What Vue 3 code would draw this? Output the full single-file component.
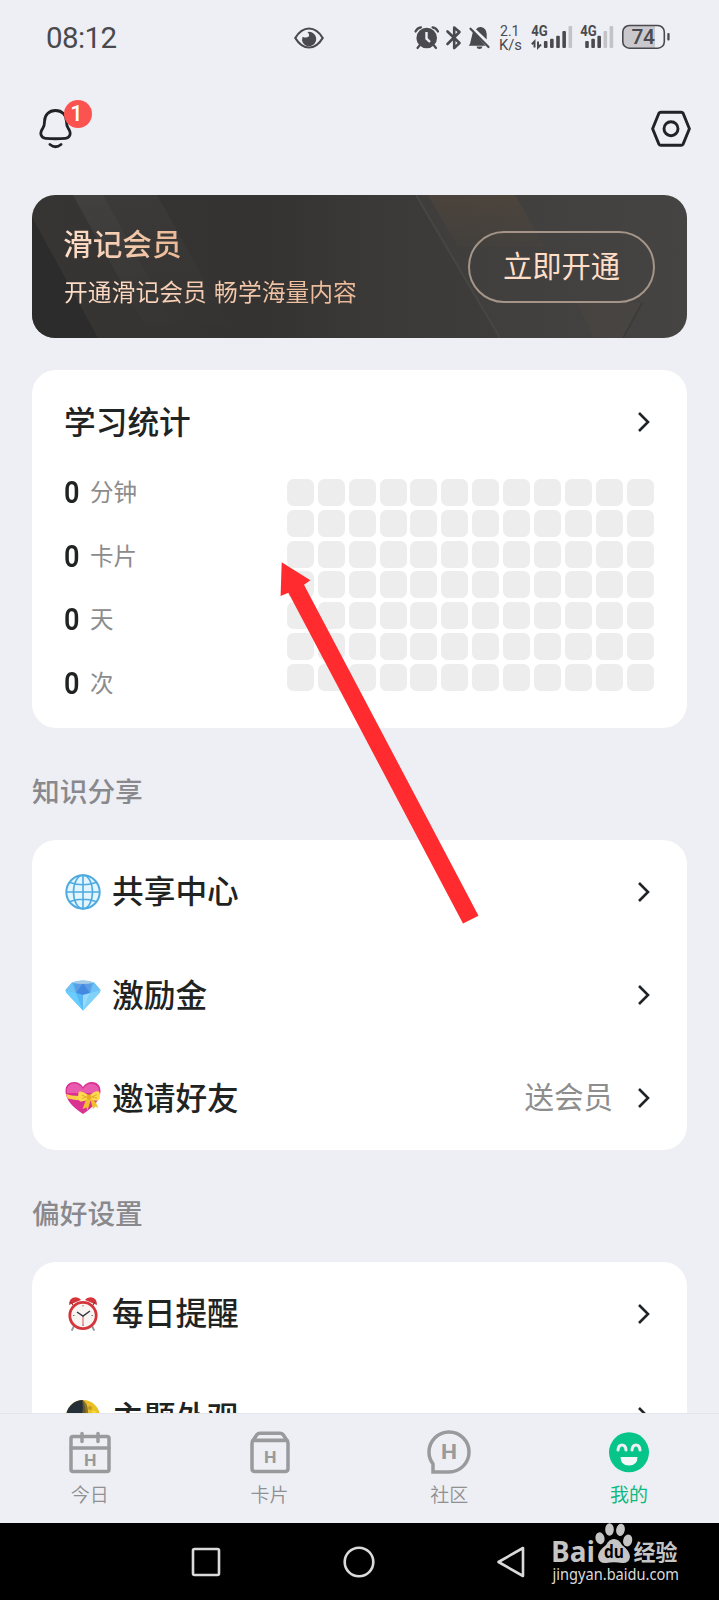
<script setup>
const stats = [
  { value: '0', unit: '分钟' },
  { value: '0', unit: '卡片' },
  { value: '0', unit: '天' },
  { value: '0', unit: '次' },
]
const shareItems = [
  { icon: 'globe', label: '共享中心', extra: '' },
  { icon: 'gem', label: '激励金', extra: '' },
  { icon: 'heart', label: '邀请好友', extra: '送会员' },
]
const prefItems = [
  { icon: 'clock', label: '每日提醒', extra: '' },
  { icon: 'moon', label: '主题外观', extra: '' },
]
const sections = [
  { title: '知识分享', items: shareItems },
  { title: '偏好设置', items: prefItems },
]
const tabs = [
  { icon: 'calendar', label: '今日' },
  { icon: 'box', label: '卡片' },
  { icon: 'chat', label: '社区' },
  { icon: 'smile', label: '我的', active: true },
]
const tops = [21, 18.7, 15.7, 11, 6]
</script>

<template>
  <div class="screen">
    <main class="content">
      <header class="status">
        <span class="time">08:12</span>
        <svg class="eye" width="30" height="22" viewBox="0 0 30 22">
          <path d="M1.3 11C5 4.8 9.500 1.500 15 1.500S25 4.800 28.700 11C25 17.200 20.500 20.500 15 20.500S5 17.200 1.300 11Z" fill="none" stroke="#49494e" stroke-width="2.200" />
          <path d="M15 4.800A7.200 7.200 0 1 1 8 13.500L8.600 9.700Q12.500 11.500 14.700 9.500Q16 7.500 13.500 5.300Z" fill="#49494e" />
        </svg>
        <svg class="indicators" width="265" height="36" viewBox="0 0 265 36">
          <g fill="#4a4a4e" stroke="none">
            <circle cx="16.700" cy="18" r="10.300" />
            <path d="M5.500 11.500Q7 8 11 7.300M22.500 7.300Q26.500 8 28 11.500M9.500 25.500 7.500 28M24 25.500 26 28" fill="none" stroke="#4a4a4e" stroke-width="2.200" stroke-linecap="round" />
            <path d="M16.500 12V18.700L20 22" fill="none" stroke="#eeeff4" stroke-width="2.400" />
            <path d="M37.500 11.500 49.500 23 44.200 28V7.500L49.500 12 37.500 24" fill="none" stroke="#4a4a4e" stroke-width="2.600" stroke-linejoin="round" stroke-linecap="round" />
            <path d="M63 11.500 60 23.700 58.800 25.800H75.500ZM66 9.200Q68 6.700 71 7Q76.300 8 76.700 14V19.500ZM66.500 26.500H72.500Q72 29 69.500 29T66.500 26.500Z" />
            <path d="M60.500 8.700 78.500 27" stroke="#4a4a4e" stroke-width="2.200" stroke-linecap="round" />
          </g>
          <g class="net">
            <text x="90" y="15.700" font-size="15.500" textLength="19.500" lengthAdjust="spacingAndGlyphs">2.1</text>
            <text x="89" y="29.700" font-size="15.500" textLength="23" lengthAdjust="spacingAndGlyphs">K/s</text>
            <text x="121.300" y="16.300" class="gen" textLength="16.500" lengthAdjust="spacingAndGlyphs">4G</text>
            <text x="170.300" y="16.300" class="gen" textLength="16.500" lengthAdjust="spacingAndGlyphs">4G</text>
          </g>
          <path d="M121.800 24.200 124.500 21.500V27.500M131 24.500 128 27.500V21.500" fill="none" stroke="#4a4a4e" stroke-width="2" />
          <rect v-for="(t, i) in tops" :key="'a' + i" :x="133.900 + i * 6.150" :y="t" width="3.600" :height="28 - t" rx="1" :fill="i < 4 ? '#4a4a4e' : '#c3c3c7'" />
          <rect v-for="(t, i) in tops" :key="'b' + i" :x="175.200 + i * 6.100" :y="t" width="3.600" :height="28 - t" rx="1" :fill="i < 3 ? '#4a4a4e' : '#c3c3c7'" />
          <path d="M219 6H245V28H219Q213 28 213 22V12Q213 6 219 6Z" fill="#c9c9cd" />
          <rect x="212.800" y="5.500" width="41.500" height="22.700" rx="6.500" fill="none" stroke="#4a4a4e" stroke-width="1.600" />
          <rect x="257.300" y="13" width="2.300" height="7.500" rx="1" fill="#4a4a4e" />
          <text x="221.500" y="24" class="battery" textLength="23.500">74</text>
        </svg>
      </header>

      <div class="toolbar">
        <div class="bell">
          <svg width="34" height="42" viewBox="0 0 34 42" fill="none" stroke="#1f2325" stroke-width="2.800" stroke-linecap="round" stroke-linejoin="round">
            <path d="M16.500 3.500C10 3.500 5.600 8 5.600 14C5.600 19.500 4.500 20 2.800 23C0.800 26.500 2 31 6.500 31.300Q16.500 32.200 26.500 31.300C31 31 32.200 26.500 30.200 23C28.500 20 27.400 19.500 27.400 14C27.400 8 23 3.500 16.500 3.500Z" />
            <path d="M11 37.500Q16.500 42 22 37.500" />
          </svg>
          <span class="badge">1</span>
        </div>
        <svg width="41" height="38" viewBox="0 0 41 38" fill="none" stroke="#1f2325" stroke-width="2.900" stroke-linejoin="round">
          <path d="M9.800 2.200H30.200Q31.500 2.200 32.100 3.300L38.400 18.700 32.100 34.100Q31.500 35.200 30.200 35.200H9.800Q8.500 35.200 7.900 34.100L1.600 18.700 7.900 3.300Q8.500 2.200 9.800 2.200Z" />
          <circle cx="20" cy="18.700" r="7" />
        </svg>
      </div>

      <section class="vip">
        <svg class="vip-bg" width="655" height="143" viewBox="0 0 655 143">
          <defs>
            <linearGradient id="fadeA" x1="0" y1="0" x2="0" y2="1">
              <stop offset="0" stop-color="#fff" stop-opacity=".03" />
              <stop offset="1" stop-color="#fff" stop-opacity="0" />
            </linearGradient>
            <linearGradient id="fadeB" x1="0" y1="0" x2="0" y2="1">
              <stop offset="0" stop-color="#5a4a3a" stop-opacity=".45" />
              <stop offset="1" stop-color="#5a4a3a" stop-opacity=".1" />
            </linearGradient>
          </defs>
          <path d="M0 22 66 143H0Z" fill="#2a2a2a" opacity=".7" />
          <path d="M41 0H125L205 143H120Z" fill="url(#fadeA)" />
          <path d="M41 0H71L150 143H120Z" fill="url(#fadeA)" />
          <path d="M383 0H655V143H468Z" fill="#fff" opacity=".015" />
          <path d="M384 0 468 143" stroke="#484643" stroke-width="2" />
          <path d="M396 0H483L513 52H426Z" fill="url(#fadeB)" />
          <path d="M545 108H610L591 143H562Z" fill="#6a5a45" opacity=".1" />
          <path d="M610 108 591 143" stroke="#3b3a38" stroke-width="1.500" />
        </svg>
        <div class="vip-text">
          <div class="vip-title">滑记会员</div>
          <div class="vip-sub">开通滑记会员 畅学海量内容</div>
        </div>
        <button class="vip-btn">立即开通</button>
      </section>

      <section class="card stats">
        <div class="stats-head">
          <span class="label">学习统计</span>
          <svg class="chev" width="14" height="22" viewBox="0 0 14 22"><path d="M2 2 11 11 2 20" /></svg>
        </div>
        <div class="stats-body">
          <ul class="figures">
            <li v-for="s in stats" :key="s.unit"><b>{{ s.value }}</b><span>{{ s.unit }}</span></li>
          </ul>
          <div class="heat"><i v-for="n in 84" :key="n"></i></div>
        </div>
      </section>

      <template v-for="sec in sections" :key="sec.title">
        <h2 class="section-title">{{ sec.title }}</h2>
        <section class="card list">
          <div v-for="it in sec.items" :key="it.label" class="row">
            <svg class="emoji" width="36" height="36" viewBox="0 0 36 36">
              <g v-if="it.icon === 'globe'" fill="none" stroke="#4eaadf" stroke-width="1.600">
                <circle cx="18" cy="18" r="16.700" fill="#e3f6ff" stroke-width="2" />
                <ellipse cx="18" cy="18" rx="9.500" ry="16.700" />
                <path d="M18 1V35M1 18H35M5 8.500Q18 13 31 8.500M5 27.500Q18 23 31 27.500" />
              </g>
              <g v-else-if="it.icon === 'gem'">
                <path d="M7 5.500Q18 1.500 29 5.500L35.500 13Q35.500 15 34 16.500L18 33.500 2 16.500Q.500 15 .500 13Z" fill="#4fb9f6" />
                <path d="M7 5.500 11 16 .500 13ZM29 5.500 25 16 35.500 13Z" fill="#6fc2f3" />
                <path d="M9 5 18 6 11 16ZM27 5 18 6 25 16Z" fill="#5d9de4" />
                <path d="M18 6 25 16 18 18 11 16Z" fill="#4389e2" />
                <path d="M.500 13 11 16 18 33.500 2 16.500Z" fill="#69cdfd" />
                <path d="M35.500 13 25 16 18 33.500 34 16.500Z" fill="#80d2f8" />
                <path d="M11 16 18 18V33.500Z" fill="#58b8f5" />
                <path d="M25 16 18 18V33.500Z" fill="#9ad9fa" />
                <path d="M7 5.500Q18 1.500 29 5.500Q18 8.500 7 5.500Z" fill="#a5cbe6" />
              </g>
              <g v-else-if="it.icon === 'heart'">
                <path d="M18 34C7 27 .500 19 .500 11C.500 5 4.500 2 9 2C13 2 16.500 4 18 7C19.500 4 23 2 27 2C31.500 2 35.500 5 35.500 11C35.500 19 29 27 18 34Z" fill="#d93292" />
                <path d="M2 9Q4 3 10 3.500Q15 4 18 9Q22 3 28 4Q33 5 34 10L33 13H2Z" fill="#ea63b3" opacity=".85" />
                <path d="M1 14Q12 18 35 13.500L34.500 19Q18 22 2.500 18.500Z" fill="#f8cf46" />
                <path d="M22 17 17.500 29 21.500 27.500 22.500 30.500 26 19ZM25 18 28 29 30.500 26.500 33.500 28Q31 22 27 18Z" fill="#f2bd2e" />
                <path d="M24 15.500Q15 9.500 13.500 12.500Q12.500 18 14.500 21Q17 23 24 18Q31 22.500 34 19.500Q36 15 34 11.500Q31 10 24 15.500Z" fill="#ffd94e" />
                <path d="M17 15 21 17 17 18.500M32 14.500 27 17 32 18" fill="none" stroke="#e0aa2d" stroke-width="1" />
                <circle cx="24" cy="17" r="2.600" fill="#e9aa26" />
              </g>
              <g v-else-if="it.icon === 'clock'">
                <path d="M9 30 7 34M27 30 29 34" stroke="#92969b" stroke-width="1.800" stroke-linecap="round" />
                <path d="M4 9Q4 2 10 1.200Q14 1.200 16 4ZM32 9Q32 2 26 1.200Q22 1.200 20 4Z" fill="#d5353a" />
                <path d="M6 6 8 9M30 6 28 9" stroke="#9a3033" stroke-width="1.300" />
                <circle cx="18" cy="19.500" r="13.200" fill="#f7f4f2" stroke="#d4353b" stroke-width="2.800" />
                <path d="M18 19.500V29.500" stroke="#db5558" />
                <path d="M12 16 18 20 25 15" fill="none" stroke="#373b40" stroke-width="1.500" />
                <path d="M18 9V10.500M18 28.500V30M8 19.500H9.500M26.500 19.500H28" stroke="#777" />
              </g>
              <g v-else>
                <circle cx="18" cy="18" r="17" fill="#e9c026" />
                <path d="M18 1A17 17 0 0 0 18 35Q24 18 18 1Z" fill="#252f37" />
                <path d="M17 1Q24 3 23 18L16 20Q19 9 17 1Z" fill="#75632c" opacity=".8" />
                <circle cx="25" cy="9" r="2" fill="#c29a22" />
                <circle cx="29" cy="14" r="2.500" fill="#f7da35" />
              </g>
            </svg>
            <span class="label">{{ it.label }}</span>
            <span class="extra">{{ it.extra }}</span>
            <svg class="chev" width="14" height="22" viewBox="0 0 14 22"><path d="M2 2 11 11 2 20" /></svg>
          </div>
        </section>
      </template>
    </main>

    <nav class="tabs">
      <div v-for="t in tabs" :key="t.label" class="tab" :class="{ active: t.active }">
        <svg width="44" height="44" viewBox="0 0 44 44" fill="none" stroke="#999a9c" stroke-width="3.500" stroke-linejoin="round" stroke-linecap="round">
          <g v-if="t.icon === 'calendar'">
            <rect x="3" y="6.500" width="38" height="35" rx="2" />
            <path d="M3 18H41M14 3.500V11.500M30 3.500V11.500" />
            <text x="16" y="35.500" textLength="12.500" lengthAdjust="spacingAndGlyphs" class="mark">H</text>
          </g>
          <g v-else-if="t.icon === 'box'">
            <path d="M4 13.500Q4 10.500 6 9L9 4.500Q10 3.200 12 3.200H32Q34 3.200 35 4.500L38 9Q40 10.500 40 13.500V38.500Q40 41.500 37 41.500H7Q4 41.500 4 38.500Z" />
            <path d="M6 10.300H38" stroke-width="3.700" />
            <text x="16" y="32.500" textLength="12.500" lengthAdjust="spacingAndGlyphs" class="mark">H</text>
          </g>
          <g v-else-if="t.icon === 'chat'">
            <path d="M6 42V34C3.500 30.500 2 26.500 2 22.200A20 20 0 1 1 22 42Z" stroke-linejoin="miter" />
            <text x="14" y="29.300" textLength="16" lengthAdjust="spacingAndGlyphs" class="mark big">H</text>
          </g>
          <g v-else stroke="none">
            <circle cx="22" cy="22.300" r="20" fill="#07c588" />
            <path d="M11 20Q11.500 15 15 15T19 20M25 20Q25.500 15 29 15T33 20" stroke="#eeeff4" stroke-width="3" />
            <path d="M13.500 27H30.500Q30.500 35.500 22 35.500T13.500 27Z" fill="#f4f8f8" />
          </g>
        </svg>
        <span>{{ t.label }}</span>
      </div>
    </nav>

    <footer class="sysnav">
      <svg width="30" height="30" viewBox="0 0 30 30"><rect x="2" y="2" width="26" height="26" rx="1.500" /></svg>
      <svg width="32" height="32" viewBox="0 0 32 32"><circle cx="16" cy="16" r="14.300" /></svg>
      <svg width="30" height="32" viewBox="0 0 30 32"><path d="M2.500 16 27 2V30Z" /></svg>
    </footer>

    <svg class="arrow" width="200" height="364" viewBox="280 561 200 364">
      <path d="M281.700 562.300 310.400 580.200 304 584.700 478.500 915.700 463 923.500 288.400 592.700 280.600 596Z" fill="#ff2b2f" />
    </svg>

    <svg class="watermark" width="140" height="66" viewBox="0 0 140 66">
      <text x="3" y="41.700" class="wm-name" textLength="44" lengthAdjust="spacingAndGlyphs">Bai</text>
      <ellipse cx="52" cy="18.300" rx="4.500" ry="6" transform="rotate(-12 52 18.300)" />
      <ellipse cx="61.500" cy="9.500" rx="4.300" ry="6.200" />
      <ellipse cx="72.500" cy="9.800" rx="4.300" ry="6.200" transform="rotate(10 72.500 9.800)" />
      <ellipse cx="79.700" cy="20.500" rx="4.500" ry="6" transform="rotate(15 79.700 20.500)" />
      <path d="M66 19Q71 19 74 25Q82 31 82 37Q81 43.500 74 43Q66 41.500 58 43Q51 43.500 50 37Q50 31 58 25Q61 19 66 19Z" />
      <text x="56" y="38" class="wm-du" textLength="20" lengthAdjust="spacingAndGlyphs">du</text>
      <text x="85.500" y="39.700" class="wm-cn" textLength="44">经验</text>
      <text x="4.500" y="59.500" class="wm-url" textLength="126.500" lengthAdjust="spacingAndGlyphs">jingyan.baidu.com</text>
    </svg>
  </div>
</template>

<style>
body { background: #eeeff4; }
</style>

<style scoped>
.screen {
  position: relative;
  width: 719px;
  height: 1600px;
  overflow: hidden;
  display: flex;
  flex-direction: column;
  background: #eeeff4;
  color: #1f2423;
  font-family: "Noto Sans CJK SC", "Noto Sans", sans-serif;
}
.content { height: 1413px; flex: none; overflow: hidden; padding: 0 32px; box-sizing: border-box; }
.status { display: flex; align-items: flex-start; height: 76px; margin: 0 -32px; }
.time { width: 294px; padding-left: 46px; margin-top: 20px; font: 400 29.500px/36px Roboto, sans-serif; letter-spacing: -.6px; color: #49494e; }
.eye { margin-top: 26.500px; }
.indicators { margin: 20px 0 0 86px; }
.status > * { flex: none; box-sizing: border-box; }
.net text { font-family: Roboto, sans-serif; fill: #4a4a4e; }
.net .gen { font-size: 14.500px; font-weight: 700; }
.battery { font: 500 21px Roboto, sans-serif; fill: #4a4a4e; }
.toolbar { display: flex; justify-content: space-between; align-items: flex-start; height: 119px; margin: 0 -5px 0 7px; }
.toolbar > svg { margin-top: 33.500px; }
.bell { position: relative; margin-top: 31px; }
.badge {
  position: absolute; left: 25px; top: -7.500px; width: 28px; height: 28px; border-radius: 50%;
  background: #fb5350; color: #fff; font: 500 22px/28px Roboto, sans-serif; text-align: center; text-indent: -3px;
}
.vip {
  position: relative; display: flex; justify-content: space-between; align-items: center; height: 143px; padding: 0 32px;
  box-sizing: border-box; border-radius: 23px; overflow: hidden;
  background: linear-gradient(90deg, #363533 0%, #343331 35%, #3b3a38 55%, #434140 100%);
}
.vip-bg { position: absolute; inset: 0; }
.vip-text { position: relative; }
.vip-title, .vip-sub { width: max-content; background: linear-gradient(90deg, #ffdfca, #eab795); -webkit-background-clip: text; background-clip: text; color: transparent; }
.vip-title { font-size: 29.700px; font-weight: 500; line-height: 42px; margin: -4px 0 0 -1px; }
.vip-sub { font-size: 23.800px; line-height: 34px; margin-top: 10px; word-spacing: 2px; }
.vip-btn {
  position: relative; width: 187px; height: 72px; padding: 0 0 5px; margin-right: 0; border: 2px solid #a59588; border-radius: 36px;
  background: transparent; color: #ffdec8; font: 400 29.300px/40px "Noto Sans CJK SC", sans-serif;
}
.card { background: #fff; border-radius: 24px; }
.stats { height: 358px; margin-top: 32px; padding: 0 33px 0 32px; box-sizing: border-box; }
.stats-head { display: flex; justify-content: space-between; align-items: center; height: 103px; }
.label { font-size: 31.700px; line-height: 46px; font-weight: 500; }
.chev { flex: none; margin-right: 3px; fill: none; stroke: #202426; stroke-width: 2.600; }
.stats-head .label { margin-top: -4px; }
.stats-body { display: flex; justify-content: space-between; }
.figures { list-style: none; margin: -13.500px 0 0; padding: 0; }
.figures li { display: flex; align-items: center; height: 63.700px; }
.figures b { width: 25px; font: 600 32px/40px Roboto, sans-serif; transform: scaleX(.85); transform-origin: 0 50%; padding-top: 1px; }
.figures span { font-size: 23.500px; line-height: 34px; color: #8c8c8c; margin: -1px 0 0 1px; }
.heat { display: grid; grid-template-columns: repeat(12, 27px); grid-auto-rows: 27px; gap: 3.870px; margin: 5.800px .500px 0 0; }
.heat i { background: #ededed; border-radius: 6.500px; }
.section-title { margin: 42px 0 0; height: 40px; line-height: 40px; padding-bottom: 30px; font-size: 27.700px; font-weight: 500; color: #89898d; }
.list { overflow: hidden; }
.row { display: flex; align-items: center; height: 103.400px; padding: 0 33px; }
.emoji { margin-right: 11px; flex: none; }
.row .label { margin-top: -5px; }
.extra { margin: -6px 24px 0 auto; font-size: 29.500px; line-height: 40px; color: #8d8d8d; }
.tabs { display: flex; height: 110px; flex: none; box-sizing: border-box; border-top: 1px solid #e4e5e9; background: #eeeff4; }
.tab { flex: 1; display: flex; flex-direction: column; align-items: center; padding-top: 16px; color: #8f9092; font-size: 19px; }
.tab span { line-height: 28px; margin-top: 6px; font-weight: 350; }
.tab.active { color: #10b981; }
.tab.active span { font-weight: 400; }
.mark { font: 700 16.500px Roboto, sans-serif; fill: #999a9c; stroke: none; }
.mark.big { font-size: 20px; }
.sysnav { flex: 1; display: flex; align-items: center; padding-left: 191px; background: #000; }
.sysnav svg { fill: none; stroke: #dadada; stroke-width: 2.600; stroke-linejoin: round; }
.sysnav svg:nth-child(2) { margin-left: 122px; }
.sysnav svg:nth-child(3) { margin-left: 121px; }
.arrow { position: absolute; left: 280px; top: 561px; }
.watermark { position: absolute; left: 548px; top: 1520px; fill: #c5c5c5; }
.wm-name { font: 700 28px "Open Sans", sans-serif; }
.wm-du { font: 700 18px "Open Sans", sans-serif; fill: #000; }
.wm-cn { font: 700 22px "Noto Sans CJK SC", sans-serif; }
.wm-url { font: 400 15.500px "Noto Sans", sans-serif; fill: #dadada; }
</style>
